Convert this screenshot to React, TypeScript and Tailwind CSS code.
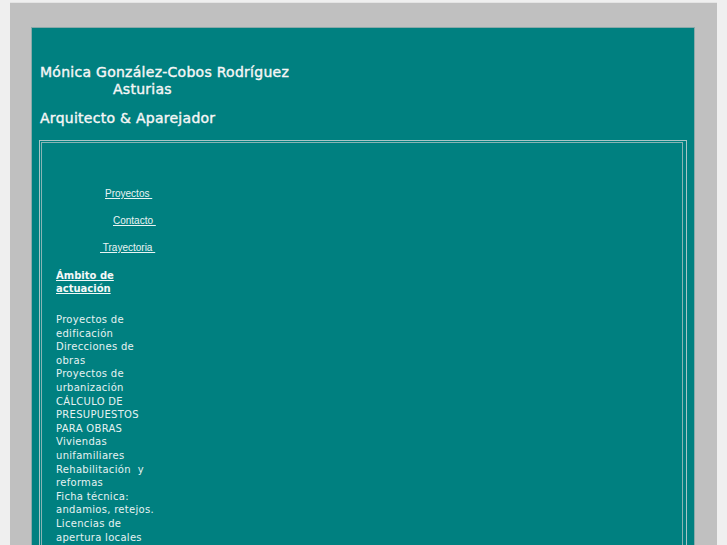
export default function App() {
  const services = [
    "Proyectos de edificación",
    "Direcciones de obras",
    "Proyectos de urbanización",
    "CÁLCULO DE PRESUPUESTOS PARA OBRAS",
    "Viviendas unifamiliares",
    "Rehabilitación\u00a0 y reformas",
    "Ficha técnica: andamios, retejos.",
    "Licencias de apertura locales",
  ];

  return (
    <div className="min-h-[545px] bg-[#efefef] pl-[10px] pt-[2px] overflow-hidden h-[545px]">
      <div className="w-[707px] border-t border-[#e4e4e4] bg-[#c0c0c0] pl-[21px] pt-[24px] h-[560px]">
        <div className="w-[664px] h-[540px] border border-[#8aa9a9] bg-[#008080] px-[7px] pt-[36px] font-['DejaVu_Sans',Verdana,sans-serif] text-[#f6f6f6]">
          <div className="pl-[1px] text-[14px] leading-[17px] tracking-[0.27px] [-webkit-text-stroke:0.4px_#f6f6f6]">
            <div>Mónica González-Cobos Rodríguez</div>
            <div className="pl-[73px]">Asturias</div>
            <div className="mt-[12px]">Arquitecto &amp; Aparejador</div>
          </div>

          <div className="mt-[13px] h-[420px] border border-[#a8c6c6] pl-px pt-px pr-[3px]">
            <div className="h-full border border-[#88b4b4] pl-[14px] pt-[45px]">
              <div className="w-[100px] font-['Liberation_Sans',Arial,sans-serif] text-[10px] leading-[12px] text-[#eaf4f4]">
                <div className="pl-[49px]">
                  <a className="underline">Proyectos&nbsp;</a>
                </div>
                <div className="mt-[15px] pl-[57px]">
                  <a className="underline">Contacto&nbsp;</a>
                </div>
                <div className="mt-[15px] pl-[44px]">
                  <a className="underline">&nbsp;Trayectoria&nbsp;</a>
                </div>
              </div>

              <div className="mt-[15px] w-[100px] text-[10px] font-bold leading-[13px] text-[#f4f8f8]">
                <a className="underline">Ámbito de actuación</a>
              </div>

              <div className="mt-[18px] w-[104px] text-[10px] leading-[13.6px] tracking-[0.3px] text-[#e6f2f2]">
                {services.map((s) => (
                  <div key={s}>{s}</div>
                ))}
              </div>
            </div>
          </div>
        </div>
      </div>
    </div>
  );
}
